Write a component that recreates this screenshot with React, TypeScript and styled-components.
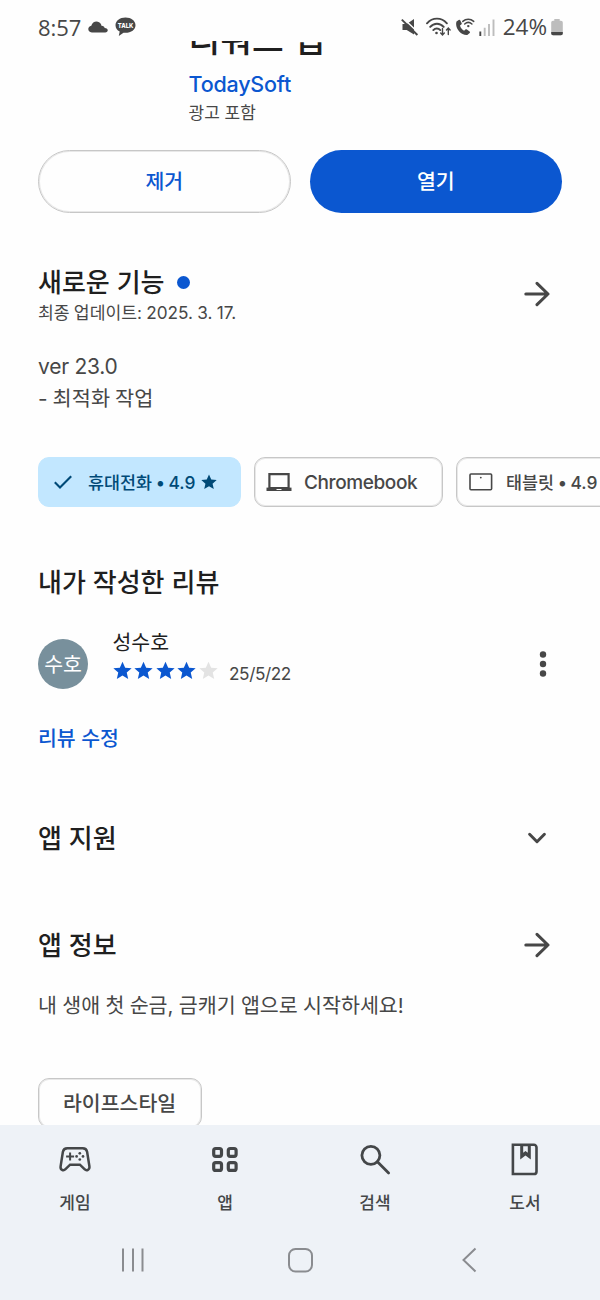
import React from 'react';
import styled, { createGlobalStyle } from 'styled-components';

const ink = '#1f1f1f';
const muted = '#474747';
const blue = '#0b57d0';
const outline = '#c7c7c7';
const outlineSoft = '#e8e8e8';

const GlobalStyle = createGlobalStyle`
  * { box-sizing: border-box; }
  body { margin: 0; background: #fefefe; }
`;

const Screen = styled.div`
  width: 600px;
  height: 1300px;
  display: flex;
  flex-direction: column;
  overflow: hidden;
  background: #fefefe;
  color: ${muted};
  font-family: Inter, 'Noto Sans CJK KR', sans-serif;
`;

const Text = styled.div<{
  $size: number;
  $line: number;
  $color?: string;
  $weight?: number;
  $track?: number;
  $word?: number;
  $drop?: number;
}>`
  font-size: ${p => p.$size}px;
  line-height: ${p => p.$line}px;
  color: ${p => p.$color ?? muted};
  font-weight: ${p => p.$weight ?? 400};
  letter-spacing: ${p => p.$track ?? 0}px;
  word-spacing: ${p => p.$word ?? 0}px;
  padding-top: ${p => p.$drop ?? 0}px;
  white-space: pre;
`;

const StatusBar = styled.header`
  height: 41px;
  flex: none;
  padding: 12px 37px 0 38px;
  display: flex;
  justify-content: space-between;
  align-items: flex-start;
`;

const StatusGroup = styled.div<{ $gap: number }>`
  display: flex;
  align-items: center;
  gap: ${p => p.$gap}px;
  height: 30px;
`;

const StatusText = styled(Text)`
  font-family: 'Open Sans', 'Noto Sans', sans-serif;
  padding-bottom: 1px;
`;

const Content = styled.main`
  height: 1084px;
  flex: none;
  overflow: hidden;
`;

const AppHeader = styled.section`
  margin-top: -21px;
  padding-left: 188.5px;
  height: 130px;
`;

const Developer = styled(Text)`
  margin-top: 10px;
`;

const AdNote = styled(Text)`
  margin-top: 3px;
`;

const Actions = styled.div`
  display: grid;
  grid-template-columns: 1fr 1fr;
  gap: 19px;
  padding: 0 38px;
  height: 63px;
`;

const ActionButton = styled.button<{ $filled?: boolean }>`
  border-radius: 32px;
  border: ${p => (p.$filled ? 'none' : `1px solid ${outline}`)};
  box-shadow: ${p => (p.$filled ? 'none' : `inset 0 0 0 1px ${outlineSoft}`)};
  background: ${p => (p.$filled ? blue : 'transparent')};
  display: flex;
  align-items: center;
  justify-content: center;
  padding: 0;
  font-family: inherit;
`;

const Section = styled.section<{ $top: number; $height: number }>`
  margin-top: ${p => p.$top}px;
  height: ${p => p.$height}px;
  padding: 0 50px 0 38px;
  display: flex;
  justify-content: space-between;
  align-items: center;
`;

const Heading = styled(Text)`
  padding-top: 2px;
`;

const WhatsNew = styled.div`
  padding-top: 2px;
`;

const TitleLine = styled.div`
  display: flex;
  align-items: center;
  gap: 12px;
`;

const NewDot = styled.span`
  width: 13px;
  height: 13px;
  border-radius: 50%;
  background: ${blue};
`;

const Paragraph = styled.div<{ $top: number }>`
  margin-top: ${p => p.$top}px;
  padding-left: 38px;
`;

const Chips = styled.div<{ $top: number }>`
  margin-top: ${p => p.$top}px;
  padding-left: 38px;
  display: flex;
  gap: 13px;
`;

const Chip = styled.div<{ $width: number; $selected?: boolean; $pad: number; $gap?: number }>`
  flex: none;
  width: ${p => p.$width}px;
  height: 50px;
  border-radius: 11px;
  border: 1px solid ${p => (p.$selected ? '#c2e7ff' : outline)};
  box-shadow: ${p => (p.$selected ? 'none' : `inset 0 0 0 1px ${outlineSoft}`)};
  background: ${p => (p.$selected ? '#c2e7ff' : 'transparent')};
  display: flex;
  align-items: center;
  gap: ${p => p.$gap ?? 0}px;
  padding-left: ${p => p.$pad}px;
`;

const ChipLabel = styled.div`
  display: flex;
  align-items: center;
  gap: 6px;
`;

const Reviewer = styled.div`
  display: flex;
  align-items: center;
  gap: 24.5px;
`;

const Avatar = styled.div`
  width: 50px;
  height: 50px;
  border-radius: 50%;
  background: #78909c;
  display: flex;
  align-items: center;
  justify-content: center;
`;

const ReviewBody = styled.div`
  height: 68px;
  display: flex;
  flex-direction: column;
`;

const Rating = styled.div`
  display: flex;
  gap: 2.5px;
  height: 30px;
  align-items: center;
`;

const ReviewDate = styled(Text)`
  padding: 7px 0 0 9px;
`;

const BottomArea = styled.footer`
  height: 175px;
  flex: none;
  background: #eef2f7;
`;

const Tabs = styled.nav`
  display: flex;
  height: 102px;
`;

const Tab = styled.div`
  flex: 1;
  display: flex;
  flex-direction: column;
  align-items: center;
  padding-top: 17px;
  gap: 13px;
`;

const SystemBar = styled.div`
  display: flex;
  justify-content: space-between;
  align-items: center;
  height: 66px;
  padding: 0 120px 0 119px;
`;

const starPath = 'M12 1.8l3.1 6.9 7.5.7-5.7 5 1.7 7.3L12 17.9l-6.6 3.8 1.7-7.3-5.7-5 7.5-.7z';

const Star = ({ size, color }: { size: number; color: string }) => (
  <svg width={size} height={size} viewBox="1 1 22 22">
    <path d={starPath} fill={color} />
  </svg>
);

const ArrowIcon = () => (
  <svg width="26" height="26" viewBox="0 0 26 26" fill="none" stroke={muted} strokeWidth="3" strokeLinecap="round" strokeLinejoin="round">
    <path d="M1.8 13h22M13 2.300 24 13 13 23.700" />
  </svg>
);

const ChevronIcon = () => (
  <svg width="26" height="26" viewBox="0 0 26 26" fill="none" stroke={muted} strokeWidth="3" strokeLinecap="round" strokeLinejoin="round">
    <path d="M5.600 9.300 13 16.700l7.400-7.400" />
  </svg>
);

const MoreIcon = () => (
  <svg width="14" height="28" viewBox="0 0 14 28" fill={muted}>
    <circle cx="7" cy="4.500" r="3.200" />
    <circle cx="7" cy="14" r="3.200" />
    <circle cx="7" cy="23.500" r="3.200" />
  </svg>
);

const CheckIcon = () => (
  <svg width="20" height="16" viewBox="0 0 20 16" fill="none" stroke="#004a77" strokeWidth="2.1">
    <path d="M1.8 8.200 7 13.400 18.200 2.200" />
  </svg>
);

const LaptopIcon = () => (
  <svg width="26" height="20" viewBox="0 0 26 20">
    <path d="M3.4 2.2h19.2v14H3.4z" fill="none" stroke={muted} strokeWidth="2.2" />
    <path d="M.5 15.600h25V19H.5z" fill={muted} />
    <path d="M10.5 17h5v1h-5z" fill="#fefefe" />
  </svg>
);

const TabletIcon = () => (
  <svg width="24" height="18" viewBox="0 0 24 18">
    <rect x="1" y="1" width="21.6" height="15.8" rx="1" fill="none" stroke={muted} strokeWidth="1.6" />
    <circle cx="11.8" cy="4.6" r="0.9" fill={muted} />
  </svg>
);

const CloudIcon = () => (
  <svg width="20" height="12" viewBox="0 0 20 12" fill={muted}>
    <path d="M3.800 11.500C-.8 11.300-.8 5.200 3.300 4.700 4.500-.3 10.800-1 13 3.200c.2.500.4 1 .4 1.500 2-.1 3 .9 3.200 2.200 4.100-.1 4.100 4.500.6 4.600z" />
  </svg>
);

const TalkIcon = () => (
  <svg width="21" height="20" viewBox="0 0 21 20">
    <path d="M10.500 .5C4.800 .5.500 3.800.500 8.200c0 2.800 1.700 5 4.200 6.300L3.800 19l4.700-3.300c7 .7 12-2.700 12-7.500 0-4.400-4.300-7.700-10-7.700z" fill={muted} />
    <text x="10.500" y="11" fontSize="6.800" fontWeight="800" textAnchor="middle" fill="#fff" fontFamily="Inter, sans-serif" textLength="15.500" lengthAdjust="spacingAndGlyphs">TALK</text>
  </svg>
);

const MuteIcon = () => (
  <svg width="18" height="18" viewBox="0 0 18 18">
    <path d="M1.500 6h4.200L13 1v15.600L5.700 12H1.500z" fill={muted} />
    <path d="M2.200.3 18.200 15.500" stroke="#fefefe" strokeWidth="1.500" />
    <path d="M.8 1.600 16.400 17" stroke={muted} strokeWidth="1.900" />
  </svg>
);

const WifiIcon = () => (
  <svg width="25" height="20" viewBox="0 0 25 20" fill="none" stroke={muted} strokeWidth="1.900" strokeLinecap="round">
    <path d="M1 6.300c5.500-6.300 14.400-6.300 19.900 0M4.200 9.900c3.800-4.300 9.700-4.300 13.500 0M7.300 13.100c2-2.200 5-2.200 7 0" />
    <circle cx="10.500" cy="16" r="1.300" fill={muted} stroke="none" />
    <path d="M16.500 11.500v6M14.700 16l1.800 1.900 1.800-1.900M22.300 17.500v-6M20.500 13l1.800-1.900L24.100 13" strokeWidth="1.400" />
  </svg>
);

const CallIcon = () => (
  <svg width="20" height="18" viewBox="0 0 20 18">
    <path d="M3.700 2 1.500 3.500C-.5 9.500 5.500 17.500 12.300 16.900l2.400-2c.5-.5.4-1.100-.1-1.500l-2.700-1.900c-.5-.4-1.100-.3-1.500.1l-1.300 1.100C7 11.600 5.600 9.700 5 7.400l1.300-1c.5-.4.6-.9.3-1.500L5.200 2.300c-.3-.6-.9-.7-1.500-.3z" fill={muted} />
    <path d="M7.800 3.400c3.200-3 7.700-3 10.900 0M9.700 6c2.200-2 5-2 7.200 0" fill="none" stroke={muted} strokeWidth="1.500" strokeLinecap="round" />
    <circle cx="13.300" cy="8.100" r="1.200" fill={muted} />
  </svg>
);

const SignalIcon = () => (
  <svg width="17" height="17" viewBox="0 0 17 17">
    <path d="M1.300 12.500V17" stroke={muted} strokeWidth="1.900" />
    <path d="M5.700 8.800V17M10 5v12M14.500 .5V17" stroke="#bdbdbd" strokeWidth="1.900" />
  </svg>
);

const BatteryIcon = () => (
  <svg width="12" height="18" viewBox="0 0 12 18">
    <path d="M3.300 1h5.400v1.700H10a1.800 1.800 0 0 1 1.800 1.800v11A1.800 1.800 0 0 1 10 17.300H2a1.800 1.800 0 0 1-1.800-1.800v-11A1.800 1.800 0 0 1 2 2.700h1.300z" fill="#bdbdbd" />
    <path d="M.2 14h11.600v1.500a1.800 1.800 0 0 1-1.800 1.800H2a1.800 1.800 0 0 1-1.800-1.800z" fill={muted} />
  </svg>
);

const GameIcon = () => (
  <svg width="36" height="36" viewBox="0 0 36 36" fill="none" stroke="#444749">
    <path d="M10.300 6.300h15.400c2.300 0 3.900 1.200 4.400 3.500l2.300 14.500c.5 3.600-2.800 5-4.900 2.900l-4.600-4.500H13.100l-4.600 4.500c-2.100 2.100-5.400.7-4.900-2.900L5.900 9.800c.5-2.300 2.100-3.500 4.400-3.500z" strokeWidth="2.500" />
    <path d="M13.100 10.400v8M9.100 14.400h8" strokeWidth="2" />
    <g fill="#444749" stroke="none">
      <circle cx="22.800" cy="11.300" r="1.350" />
      <circle cx="22.800" cy="17.500" r="1.350" />
      <circle cx="19.600" cy="14.400" r="1.350" />
      <circle cx="26" cy="14.400" r="1.350" />
    </g>
  </svg>
);

const AppsIcon = () => (
  <svg width="36" height="36" viewBox="0 0 36 36" fill="none" stroke="#444749" strokeWidth="3.200">
    <rect x="6.700" y="6.500" width="7.800" height="7.800" rx="2" />
    <rect x="21.300" y="6.500" width="7.800" height="7.800" rx="2" />
    <rect x="6.700" y="20.600" width="7.800" height="7.800" rx="2" />
    <rect x="21.300" y="20.600" width="7.800" height="7.800" rx="2" />
  </svg>
);

const SearchIcon = () => (
  <svg width="36" height="36" viewBox="0 0 36 36" fill="none" stroke="#444749" strokeWidth="2.800">
    <circle cx="13.900" cy="13.300" r="9" />
    <path d="M20.400 19.800 31.600 31" strokeLinecap="round" />
  </svg>
);

const BookIcon = () => (
  <svg width="36" height="36" viewBox="0 0 36 36">
    <path d="M6.500 3.400h21a2.600 2.600 0 0 1 2.600 2.600v24a2.600 2.600 0 0 1-2.600 2.600h-21z" transform="translate(-.6 -.6)" fill="none" stroke="#444749" strokeWidth="2.600" />
    <path d="M13.200 3v14.500l5.300-4 5.300 4V3z" fill="#444749" />
    <path d="M16.200 4.200v6.500l2.300-1.700 2.300 1.700V4.200z" fill="#eef2f7" />
  </svg>
);

const sysProps = { width: 28, height: 28, viewBox: '0 0 28 28', fill: 'none', stroke: '#8a8c90', strokeWidth: 2 };

const tabs = [
  { label: '게임', icon: <GameIcon /> },
  { label: '앱', icon: <AppsIcon /> },
  { label: '검색', icon: <SearchIcon /> },
  { label: '도서', icon: <BookIcon /> },
];

export default function App() {
  return (
    <>
      <GlobalStyle />
      <Screen>
        <StatusBar>
          <StatusGroup $gap={7}>
            <StatusText $size={22} $line={30} $track={-0.1}>8:57</StatusText>
            <CloudIcon />
            <TalkIcon />
          </StatusGroup>
          <StatusGroup $gap={7}>
            <StatusGroup $gap={7}>
              <MuteIcon />
              <StatusGroup $gap={4}>
                <WifiIcon />
                <CallIcon />
                <SignalIcon />
              </StatusGroup>
            </StatusGroup>
            <StatusGroup $gap={4}>
              <StatusText $size={22.5} $line={30}>24%</StatusText>
              <BatteryIcon />
            </StatusGroup>
          </StatusGroup>
        </StatusBar>

        <Content>
          <AppHeader>
            <Text $size={34.5} $line={40} $weight={500} $color={ink}>리워드 앱</Text>
            <Developer $size={21.5} $line={28} $weight={500} $color={blue} $track={-0.2}>TodaySoft</Developer>
            <AdNote $size={17} $line={24}>광고 포함</AdNote>
          </AppHeader>

          <Actions>
            <ActionButton>
              <Text $size={20.5} $line={28} $weight={500} $color={blue} $drop={1}>제거</Text>
            </ActionButton>
            <ActionButton $filled>
              <Text $size={20.5} $line={28} $weight={500} $color="#fff" $drop={1}>열기</Text>
            </ActionButton>
          </Actions>

          <Section $top={50} $height={62}>
            <WhatsNew>
              <TitleLine>
                <Heading $size={26} $line={34} $weight={500} $color={ink}>새로운 기능</Heading>
                <NewDot />
              </TitleLine>
              <Text $size={17.2} $line={26} $word={-0.6}>최종 업데이트: 2025. 3. 17.</Text>
            </WhatsNew>
            <ArrowIcon />
          </Section>

          <Paragraph $top={26}>
            <Text $size={21} $line={31} $track={-0.25}>ver 23.0</Text>
            <Text $size={20.8} $line={31} $word={-0.8} $drop={1}>- 최적화 작업</Text>
          </Paragraph>

          <Chips $top={43}>
            <Chip $width={203} $selected $pad={14} $gap={15}>
              <CheckIcon />
              <ChipLabel>
                <Text $size={17.4} $line={28} $weight={500} $color="#004a77" $word={-1} $drop={2}>휴대전화 • 4.9</Text>
                <Star size={16} color="#004a77" />
              </ChipLabel>
            </Chip>
            <Chip $width={189} $pad={11} $gap={12}>
              <LaptopIcon />
              <Text $size={19} $line={28} $weight={500} $track={-0.4} $drop={2}>Chromebook</Text>
            </Chip>
            <Chip $width={203} $pad={12} $gap={13}>
              <TabletIcon />
              <Text $size={17.4} $line={28} $weight={500} $word={-1} $drop={2}>태블릿 • 4.9</Text>
            </Chip>
          </Chips>

          <Section $top={57} $height={36}>
            <Heading $size={26} $line={36} $weight={500} $color={ink}>내가 작성한 리뷰</Heading>
          </Section>

          <Section $top={32} $height={64}>
            <Reviewer>
              <Avatar>
                <Text $size={20.5} $line={28} $color="#fff" $drop={1}>수호</Text>
              </Avatar>
              <ReviewBody>
                <Text $size={20.5} $line={25} $color={ink}>성수호</Text>
                <Rating>
                  {[1, 2, 3, 4, 5].map(n => (
                    <Star key={n} size={19} color={n <= 4 ? blue : '#e3e3e3'} />
                  ))}
                  <ReviewDate $size={17.2} $line={24} $track={-0.4}>25/5/22</ReviewDate>
                </Rating>
              </ReviewBody>
            </Reviewer>
            <MoreIcon />
          </Section>

          <Section $top={28} $height={28}>
            <Text $size={20.5} $line={28} $weight={500} $color={blue} $drop={2}>리뷰 수정</Text>
          </Section>

          <Section $top={68} $height={36}>
            <Heading $size={26} $line={36} $weight={500} $color={ink}>앱 지원</Heading>
            <ChevronIcon />
          </Section>

          <Section $top={71} $height={36}>
            <Heading $size={26} $line={36} $weight={500} $color={ink}>앱 정보</Heading>
            <ArrowIcon />
          </Section>

          <Paragraph $top={28}>
            <Text $size={20.6} $line={30} $word={-0.5}>내 생애 첫 순금, 금캐기 앱으로 시작하세요!</Text>
          </Paragraph>

          <Chips $top={57}>
            <Chip $width={164} $pad={24}>
              <Text $size={20.5} $line={28} $weight={500} $drop={2}>라이프스타일</Text>
            </Chip>
          </Chips>
        </Content>

        <BottomArea>
          <Tabs>
            {tabs.map(tab => (
              <Tab key={tab.label}>
                {tab.icon}
                <Text $size={17} $line={24} $weight={500} $color="#444749">{tab.label}</Text>
              </Tab>
            ))}
          </Tabs>
          <SystemBar>
            <svg {...sysProps}><path d="M4 2.500v23M14 2.500v23M23.500 2.500v23" /></svg>
            <svg {...sysProps}><rect x="3" y="3" width="23" height="22.500" rx="6.500" /></svg>
            <svg {...sysProps}><path d="M23.500 2.500 11.500 14l12 11.500" /></svg>
          </SystemBar>
        </BottomArea>
      </Screen>
    </>
  );
}
